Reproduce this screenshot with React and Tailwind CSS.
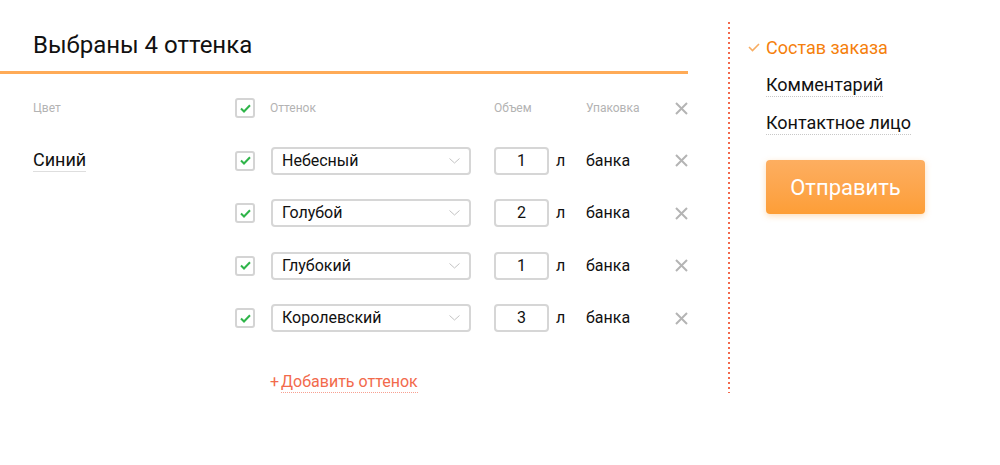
import { useState } from 'react';

const rows = [
  { shade: 'Небесный', volume: '1' },
  { shade: 'Голубой', volume: '2' },
  { shade: 'Глубокий', volume: '1' },
  { shade: 'Королевский', volume: '3' },
];

function Checkbox() {
  return (
    <div className="w-5 h-5 shrink-0 rounded-[3px] border-2 border-[#d4d4d4] flex items-center justify-center">
      <svg width="11" height="9" viewBox="0 0 11 9" fill="none">
        <path d="M1 4.5 L4 7.5 L10 1.2" stroke="#2fb54a" strokeWidth="2" />
      </svg>
    </div>
  );
}

function CloseIcon() {
  return (
    <svg width="13" height="13" viewBox="0 0 13 13" fill="none">
      <path d="M1 1 L12 12 M12 1 L1 12" stroke="#b4b4b4" strokeWidth="2" />
    </svg>
  );
}

function Chevron() {
  return (
    <svg width="11" height="6" viewBox="0 0 11 6" fill="none">
      <path d="M0.5 0.5 L5.5 5 L10.5 0.5" stroke="#c4c4c4" strokeWidth="1" />
    </svg>
  );
}

export default function App() {
  const [items] = useState(rows);

  return (
    <div className="w-[1000px] h-[465px] bg-white flex font-['Roboto',sans-serif] text-[#111]">
      {/* Left: shade list */}
      <div className="w-[688px] shrink-0">
        <div className="h-[74px] pt-[30px] pl-[33px] border-b-[3px] border-[#ffab57]">
          <h1 className="text-[24px] leading-[30px]">Выбраны 4 оттенка</h1>
        </div>

        <div className="pt-[8px]">
          {/* header row */}
          <div className="h-[52.5px] flex items-center pl-[33px] text-[12px] text-[#b3b3b3]">
            <div className="w-[202px]">Цвет</div>
            <Checkbox />
            <div className="ml-[15px] w-[224px]">Оттенок</div>
            <div className="w-[92px]">Объем</div>
            <div className="w-[89px]">Упаковка</div>
            <CloseIcon />
          </div>

          {items.map((row, i) => (
            <div key={i} className="h-[52.5px] flex items-center pl-[33px] text-[16px]">
              <div className="w-[202px]">
                {i === 0 && (
                  <span className="inline-block text-[18px] border-b border-[#dedede] leading-[22px]">Синий</span>
                )}
              </div>
              <Checkbox />
              <div className="ml-[16px] w-[200px] h-[28px] rounded-[4px] border-2 border-[#d6d6d6] flex items-center justify-between pl-[9px] pr-[9px]">
                <span>{row.shade}</span>
                <Chevron />
              </div>
              <div className="ml-[23px] w-[55px] h-[28px] rounded-[4px] border-2 border-[#d6d6d6] flex items-center justify-center">
                {row.volume}
              </div>
              <div className="ml-[7px] w-[30px]">л</div>
              <div className="w-[89px]">банка</div>
              <CloseIcon />
            </div>
          ))}

          <div className="pl-[270px] pt-[25px] text-[16px] text-[#f26a4c]">
            <span className="mr-[2px]">+</span>
            <span className="border-b border-dotted border-[#f7a090] leading-[20px] inline-block">Добавить оттенок</span>
          </div>
        </div>
      </div>

      {/* Right: order steps */}
      <div className="ml-[40px] mt-[22px] h-[371px] w-[2px] shrink-0 bg-[repeating-linear-gradient(to_bottom,#f4694c_0_2px,transparent_2px_5px)]" />
      <div className="mt-[22px] pl-[18px] pt-[6px]">
        <div className="h-[38px] flex items-center text-[18px] text-[#f57f0c]">
          <svg width="12" height="9" viewBox="0 0 12 9" fill="none" className="mr-[6px]">
            <path d="M1 4 L4.5 7.5 L11 1" stroke="#f8ad62" strokeWidth="1.6" />
          </svg>
          Состав заказа
        </div>
        <div className="h-[38px] flex items-center pl-[18px] text-[18px]">
          <span className="border-b border-dotted border-[#c8c8c8] leading-[22px]">Комментарий</span>
        </div>
        <div className="h-[38px] flex items-center pl-[18px] text-[18px]">
          <span className="border-b border-dotted border-[#c8c8c8] leading-[22px]">Контактное лицо</span>
        </div>
        <button className="ml-[18px] mt-[18px] w-[159px] h-[54px] rounded-[4px] bg-gradient-to-b from-[#fdae60] to-[#fd9e36] text-white text-[22px] shadow-[0_2px_6px_rgba(253,158,54,0.35)]">
          Отправить
        </button>
      </div>
    </div>
  );
}
